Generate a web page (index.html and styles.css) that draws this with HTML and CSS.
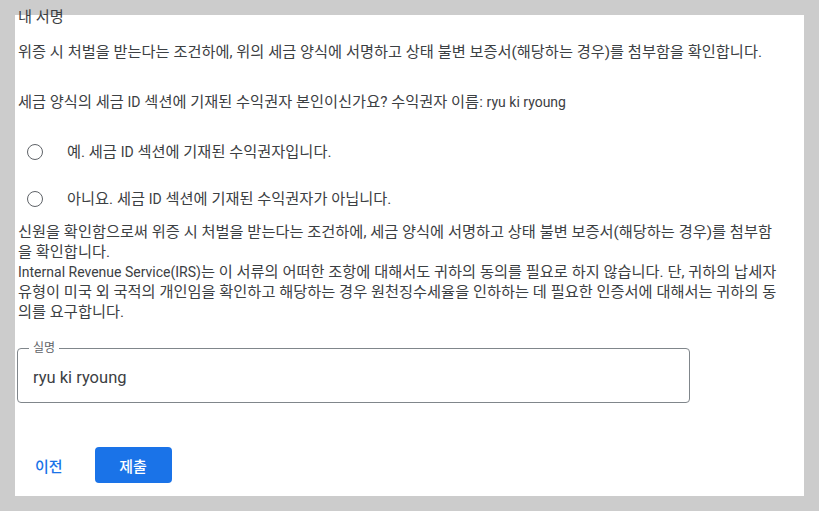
FILE: index.html
```html
<!DOCTYPE html>
<html lang="ko">
<head>
<meta charset="utf-8">
<link rel="stylesheet" href="styles.css">
</head>
<body>
<div class="panel">
  <div class="heading">내 서명</div>
  <p class="p-first">위증 시 처벌을 받는다는 조건하에, 위의 세금 양식에 서명하고 상태 불변 보증서(해당하는 경우)를 첨부함을 확인합니다.</p>
  <p class="p-question">세금 양식의 세금 <span class="en" lang="en">ID</span> 섹션에 기재된 수익권자 본인이신가요? 수익권자 이름: <span class="en" lang="en">ryu ki ryoung</span></p>
  <div class="radios">
    <label class="radio-row"><span class="radio"></span><span class="radio-label">예. 세금 <span class="en" lang="en">ID</span> 섹션에 기재된 수익권자입니다.</span></label>
    <label class="radio-row"><span class="radio"></span><span class="radio-label">아니요. 세금 <span class="en" lang="en">ID</span> 섹션에 기재된 수익권자가 아닙니다.</span></label>
  </div>
  <p class="p-body">신원을 확인함으로써 위증 시 처벌을 받는다는 조건하에, 세금 양식에 서명하고 상태 불변 보증서(해당하는 경우)를 첨부함을 확인합니다.<br><span class="en" lang="en">Internal Revenue Service(IRS)</span>는 이 서류의 어떠한 조항에 대해서도 귀하의 동의를 필요로 하지 않습니다. 단, 귀하의 납세자 유형이 미국 외 국적의 개인임을 확인하고 해당하는 경우 원천징수세율을 인하하는 데 필요한 인증서에 대해서는 귀하의 동의를 요구합니다.</p>
  <div class="field">
    <span class="field-label">실명</span>
    <div class="field-value">ryu ki ryoung</div>
  </div>
  <div class="actions">
    <button class="btn-text">이전</button>
    <button class="btn-primary">제출</button>
  </div>
</div>
</body>
</html>
```
FILE: styles.css
```css
html, body {
  margin: 0;
  padding: 0;
  background: #cccccc;
}
body {
  padding: 15px;
  font-family: Roboto, "Noto Sans CJK KR", sans-serif;
  font-size: 15.25px;
  line-height: 20px;
  color: #3c4043;
}
.en {
  font-size: 14px;
}
.panel {
  display: flow-root;
  background: #ffffff;
  padding: 0 20px 13px 2px;
  height: 481px;
  box-sizing: border-box;
}
.heading {
  margin-top: -8px;
  padding-left: 1px;
}
p {
  margin: 0;
  padding-left: 1px;
}
.p-first {
  margin-top: 15px;
}
.p-question {
  margin-top: 30px;
}
.radios {
  margin-top: 16px;
  display: flex;
  flex-direction: column;
}
.radio-row {
  display: flex;
  align-items: center;
  height: 47px;
  padding-left: 10px;
}
.radio {
  width: 16px;
  height: 16px;
  box-sizing: border-box;
  border: 1.6px solid #5f6368;
  border-radius: 50%;
  flex: none;
}
.radio-label {
  margin-left: 24px;
}
.field {
  position: relative;
  margin-top: 26px;
  width: 673px;
  height: 55px;
  box-sizing: border-box;
  border: 1px solid #80868b;
  border-radius: 4px;
  display: flex;
  align-items: center;
  padding: 5px 0 0 15px;
}
.field-label {
  position: absolute;
  left: 11px;
  top: -8px;
  padding: 0 4px;
  background: #ffffff;
  font-size: 12px;
  line-height: 14px;
  color: #5f6368;
}
.field-value {
  font-size: 16.5px;
  line-height: 22px;
  color: #3c4043;
}
.actions {
  margin-top: 44px;
  display: flex;
  align-items: center;
}
button {
  font-family: Roboto, "Noto Sans CJK KR", sans-serif;
  font-size: 15px;
  font-weight: 500;
  height: 36px;
  border: none;
  border-radius: 4px;
  cursor: pointer;
}
.btn-text {
  background: transparent;
  color: #1a73e8;
  padding: 0 18px;
}
.btn-primary {
  margin-left: 14px;
  width: 77px;
  background: #1a73e8;
  color: #ffffff;
  padding: 0;
}
```
